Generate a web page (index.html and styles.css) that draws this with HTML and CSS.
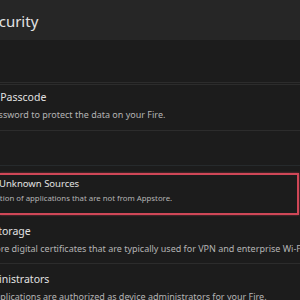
FILE: index.html
```html
<!DOCTYPE html>
<html lang="en">
<head>
  <meta charset="UTF-8" />
  <title>Security</title>
  <link rel="stylesheet" href="styles.css">
</head>
<body>
  <header class="top-bar">
    <h1 class="page-title">Security</h1>
  </header>

  <main class="settings">
    <div class="section-gap"></div>

    <div class="item item-first">
      <div class="item-title title-passcode">Lock Screen Passcode</div>
      <div class="item-desc desc-passcode">Set a password to protect the data on your Fire.</div>
    </div>

    <div class="blank-row"></div>

    <div class="item item-marked">
      <div class="item-title title-sources">Unknown Sources</div>
      <div class="item-desc desc-sources">Allow installation of applications that are not from Appstore.</div>
    </div>

    <div class="item item-after-mark">
      <div class="item-title title-storage">Credential Storage</div>
      <div class="item-desc desc-storage">Store digital certificates that are typically used for VPN and enterprise Wi-Fi.</div>
    </div>

    <div class="item">
      <div class="item-title title-admins">Device Administrators</div>
      <div class="item-desc desc-admins">Applications are authorized as device administrators for your Fire.</div>
    </div>
  </main>
</body>
</html>
```

FILE: styles.css
```css
:root {
  --color-bg: #1c1c1c;
  --color-header: #262626;
  --color-line: #2c2c2c;
  --color-title: #e2e2e2;
  --color-desc: #b4b4b4;
  --color-mark: #cf4757;
}

body {
  margin: 0;
  width: 300px;
  height: 300px;
  overflow: hidden;
  background-color: var(--color-bg);
  font-family: 'Noto Sans', 'Open Sans', sans-serif;
}

.top-bar {
  height: 40px;
  background-color: var(--color-header);
  box-sizing: border-box;
  padding-top: 12px;
}

.page-title {
  margin: 0;
  font-size: 15px;
  line-height: 19px;
  font-weight: 400;
  color: var(--color-title);
  white-space: nowrap;
  text-indent: -18px;
}

.section-gap {
  height: 42px;
  border-bottom: 1px solid var(--color-line);
}

.item {
  padding: 7px 0 6px;
  border-top: 1px solid var(--color-line);
  white-space: nowrap;
  overflow: hidden;
}

.item-first {
  margin-top: 1px;
  padding-top: 4px;
  padding-bottom: 7px;
}

.item-after-mark {
  border-top: none;
  padding-top: 8px;
}

.item-title {
  font-size: 10.5px;
  line-height: 17px;
  color: var(--color-title);
}

.item-desc {
  font-size: 9px;
  line-height: 17px;
  color: var(--color-desc);
}

.blank-row {
  height: 34px;
  border-top: 1px solid var(--color-line);
  border-bottom: 1px solid #262a2c;
  margin-bottom: 7px;
}

.item-marked {
  padding: 1px 0 7px;
  border: 2px solid var(--color-mark);
  border-left: none;
  margin-right: 1px;
  box-shadow: 0 0 2px rgba(207, 71, 87, 0.6);
}

.item-marked .item-title {
  font-size: 9.5px;
  line-height: 15px;
}

.item-marked .item-desc {
  font-size: 7.8px;
  line-height: 15px;
}

.title-passcode { text-indent: -61px; }
.desc-passcode { text-indent: -35px; }
.title-sources { text-indent: -1px; }
.desc-sources { text-indent: -48px; }
.title-storage { text-indent: -61px; }
.desc-storage { text-indent: -13px; }
.title-admins { text-indent: -59px; }
.desc-admins { text-indent: -11px; }
```
